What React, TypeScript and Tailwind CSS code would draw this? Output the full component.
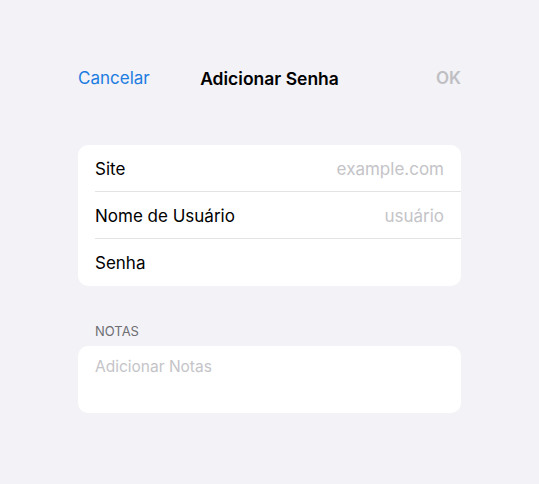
const rows = [
  { label: "Site", placeholder: "example.com" },
  { label: "Nome de Usuário", placeholder: "usuário" },
  { label: "Senha", placeholder: "" },
]

export default function App() {
  return (
    <div
      className="w-[539px] h-[484px] bg-[#f2f2f7] px-[78px] pt-[66px]"
      style={{ fontFamily: "Inter, 'Liberation Sans', sans-serif" }}
    >
      <div className="grid grid-cols-[1fr_auto_1fr] items-center h-[26px] text-[17px]">
        <span className="text-[#1c7ce0]">Cancelar</span>
        <span className="font-semibold text-black text-[17.5px]">Adicionar Senha</span>
        <span className="font-semibold text-[#bfbfc3] text-right">OK</span>
      </div>

      <div className="mt-[53px] bg-white rounded-[10px] overflow-hidden">
        {rows.map((row, i) => (
          <div key={row.label} className="pl-[17px]">
            <div
              className={
                "flex items-center justify-between h-[47px] pt-[3px] pr-[17px] text-[17px] " +
                (i < rows.length - 1 ? "border-b border-[#e3e3e6]" : "")
              }
            >
              <span className="text-black">{row.label}</span>
              <span className="text-[#c4c4c8]">{row.placeholder}</span>
            </div>
          </div>
        ))}
      </div>

      <div className="mt-[39px] pl-[17px] text-[13px] text-[#6e6e73] leading-none">NOTAS</div>

      <div className="mt-[8px] h-[67px] bg-white rounded-[10px] px-[17px] pt-[8px]">
        <span className="text-[15.5px] text-[#c4c4c8]">Adicionar Notas</span>
      </div>
    </div>
  )
}
